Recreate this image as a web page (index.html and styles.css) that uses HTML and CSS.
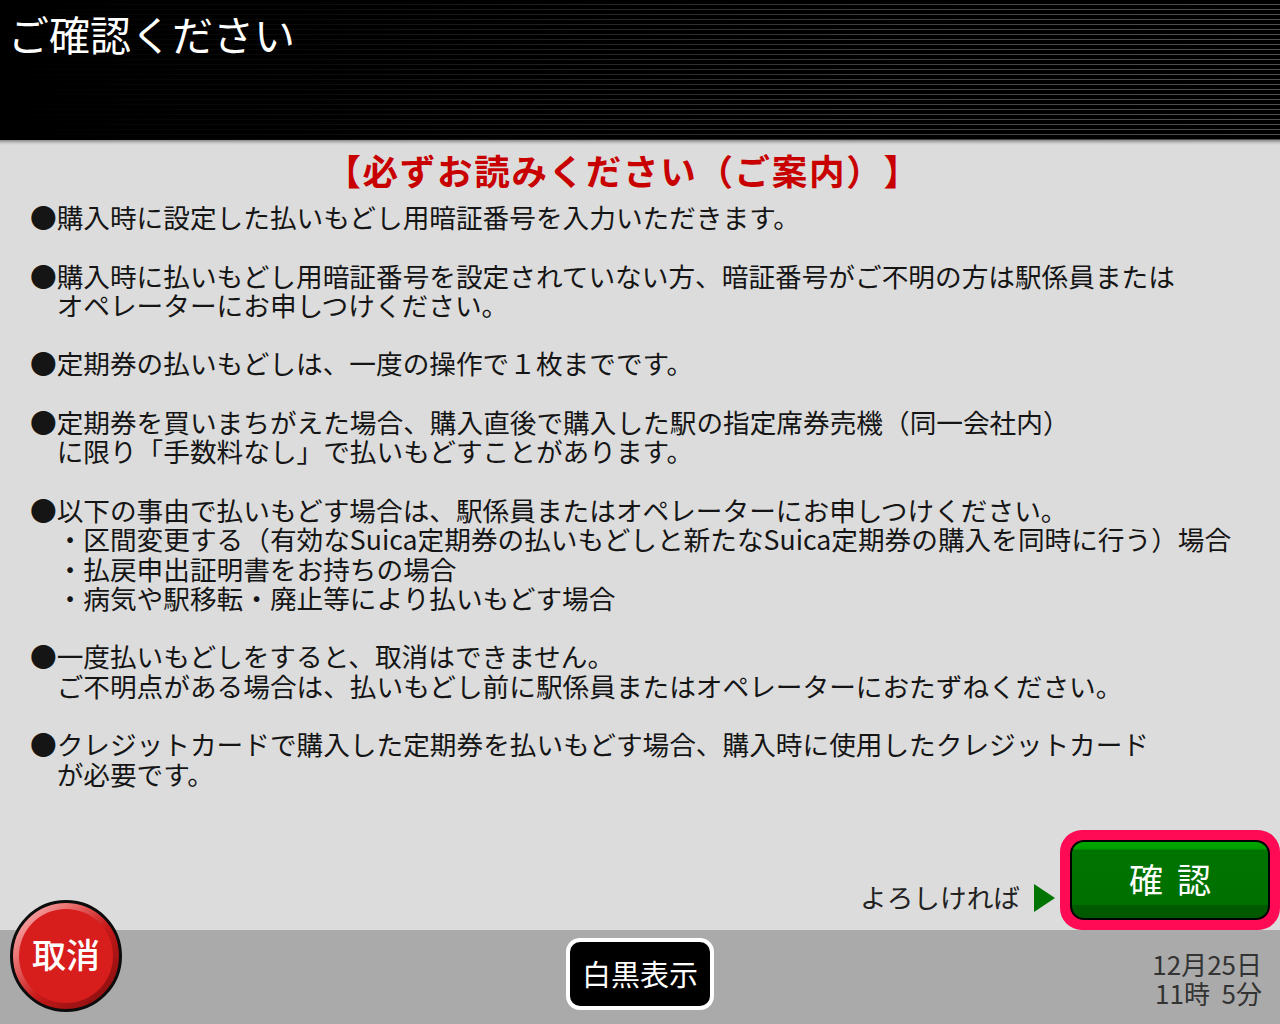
FILE: index.html
```html
<!DOCTYPE html>
<html lang="ja">
<head>
<meta charset="utf-8">
<title>ご確認ください</title>
<link rel="stylesheet" href="styles.css">
</head>
<body>
<div class="screen">
  <header class="header">
    <h1 class="header-title">ご確認ください</h1>
  </header>
  <div class="header-shadow"></div>
  <main class="main">
    <h2 class="notice-title">【必ずお読みください（ご案内）】</h2>
    <div class="notes">
      <p class="note">●購入時に設定した払いもどし用暗証番号を入力いただきます。</p>
      <p class="note">●購入時に払いもどし用暗証番号を設定されていない方、暗証番号がご不明の方は駅係員または<br>オペレーターにお申しつけください。</p>
      <p class="note">●定期券の払いもどしは、一度の操作で１枚までです。</p>
      <p class="note">●定期券を買いまちがえた場合、購入直後で購入した駅の指定席券売機（同一会社内）<br>に限り「手数料なし」で払いもどすことがあります。</p>
      <div class="note">
        <p class="note-line">●以下の事由で払いもどす場合は、駅係員またはオペレーターにお申しつけください。</p>
        <p class="sub">・区間変更する（有効なSuica定期券の払いもどしと新たなSuica定期券の購入を同時に行う）場合</p>
        <p class="sub">・払戻申出証明書をお持ちの場合</p>
        <p class="sub">・病気や駅移転・廃止等により払いもどす場合</p>
      </div>
      <p class="note">●一度払いもどしをすると、取消はできません。<br>ご不明点がある場合は、払いもどし前に駅係員またはオペレーターにおたずねください。</p>
      <p class="note">●クレジットカードで購入した定期券を払いもどす場合、購入時に使用したクレジットカード<br>が必要です。</p>
    </div>
    <div class="confirm-row">
      <span class="prompt">よろしければ</span>
      <span class="arrow"></span>
      <div class="confirm-frame">
        <button class="confirm-btn"><span>確</span><span>認</span></button>
      </div>
    </div>
  </main>
  <footer class="footer">
    <div class="cancel-wrap">
      <button class="cancel-btn"><span class="cancel-inner">取消</span></button>
    </div>
    <button class="mono-btn">白黒表示</button>
    <div class="clock">
      <div>12月25日</div>
      <div>11時&nbsp;&nbsp;5分</div>
    </div>
  </footer>
</div>
</body>
</html>
```

FILE: styles.css
```css
html, body {
  margin: 0;
  padding: 0;
}
body {
  width: 1280px;
  height: 1024px;
  overflow: hidden;
  background: #dcdcdc;
  font-family: "Noto Sans CJK JP", "Noto Sans", sans-serif;
  color: #151515;
  text-spacing-trim: space-all;
}
.screen {
  width: 1280px;
  height: 1024px;
  display: flex;
  flex-direction: column;
}
.header {
  height: 140px;
  flex: none;
  background:
    linear-gradient(to right, rgba(0,0,0,1) 0%, rgba(0,0,0,0.85) 25%, rgba(0,0,0,0.2) 70%, rgba(0,0,0,0) 100%),
    repeating-linear-gradient(to bottom, #000 0px, #000 4px, #505050 4px, #505050 5px);
}
.header-title {
  margin: 0;
  padding: 8px 0 0 8px;
  font-size: 41px;
  line-height: 50px;
  font-weight: 400;
  color: #fff;
}
.header-shadow {
  height: 5px;
  flex: none;
  background: linear-gradient(to bottom, #8a8a8a, #c8c8c8 60%, #dcdcdc);
}
.main {
  flex: 1;
  display: flex;
  flex-direction: column;
  padding: 0;
}
.notice-title {
  margin: 0;
  padding: 3px 34px 0 0;
  text-align: center;
  font-size: 35.5px;
  line-height: 44px;
  font-weight: 700;
  letter-spacing: 1.7px;
  color: #c80000;
}
.notes {
  padding: 10px 0 0 30px;
  font-size: 26.67px;
  line-height: 29.3px;
}
.note {
  margin: 0 0 29.3px 0;
  padding-left: 26.67px;
  text-indent: -26.67px;
}
.note-line {
  margin: 0;
}
.sub {
  margin: 0;
  text-indent: 0;
}
.confirm-row {
  margin-top: auto;
  display: flex;
  justify-content: flex-end;
  align-items: flex-end;
}
.prompt {
  font-size: 26.67px;
  line-height: 30px;
  color: #222;
  margin-bottom: 18px;
}
.arrow {
  width: 0;
  height: 0;
  border-top: 14px solid transparent;
  border-bottom: 14px solid transparent;
  border-left: 21px solid #007400;
  margin: 0 5px 18px 14px;
}
.confirm-frame {
  width: 200px;
  height: 80px;
  padding: 10px;
  background: #ff0a55;
  border-radius: 22px;
}
.confirm-btn {
  width: 200px;
  height: 80px;
  box-sizing: border-box;
  border: 2px solid #000;
  border-radius: 14px;
  background: linear-gradient(to bottom, #00a800 0, #009c00 7px, #007400 8px, #007000 82%, #005c00 83%, #005800 100%);
  display: flex;
  justify-content: center;
  align-items: center;
  gap: 14px;
  padding: 0 0 2px 0;
  color: #fff;
  font-family: "Noto Sans CJK JP", sans-serif;
  font-size: 34px;
  line-height: 1;
  font-weight: 400;
}
.footer {
  height: 94px;
  flex: none;
  background: #aaaaaa;
  display: grid;
  grid-template-columns: 1fr auto 1fr;
  align-items: start;
  position: relative;
}
.cancel-wrap {
  position: relative;
}
.cancel-btn {
  position: absolute;
  left: 10px;
  top: -30px;
  width: 112px;
  height: 112px;
  box-sizing: border-box;
  border-radius: 50%;
  border: 3px solid #0c0c0c;
  padding: 6px;
  background: linear-gradient(135deg, #ffc4c4 0%, #e86a6a 30%, #c81a1a 55%, #7a0c0c 100%);
  display: flex;
}
.cancel-inner {
  flex: 1;
  border-radius: 50%;
  background: #d81d1d;
  display: flex;
  justify-content: center;
  align-items: center;
  color: #fff;
  font-family: "Noto Sans CJK JP", sans-serif;
  font-size: 34px;
  font-weight: 500;
  line-height: 1;
  padding-bottom: 4px;
}
.mono-btn {
  margin-top: 8px;
  width: 148px;
  height: 72px;
  box-sizing: border-box;
  border: 4px solid #fff;
  border-radius: 14px;
  background: #000;
  color: #fff;
  font-family: "Noto Sans CJK JP", sans-serif;
  font-size: 29px;
  line-height: 1;
  padding: 0 0 2px 0;
}
.clock {
  justify-self: end;
  padding: 19px 18px 0 0;
  text-align: right;
  font-size: 26px;
  line-height: 29px;
  color: #333;
}
```
